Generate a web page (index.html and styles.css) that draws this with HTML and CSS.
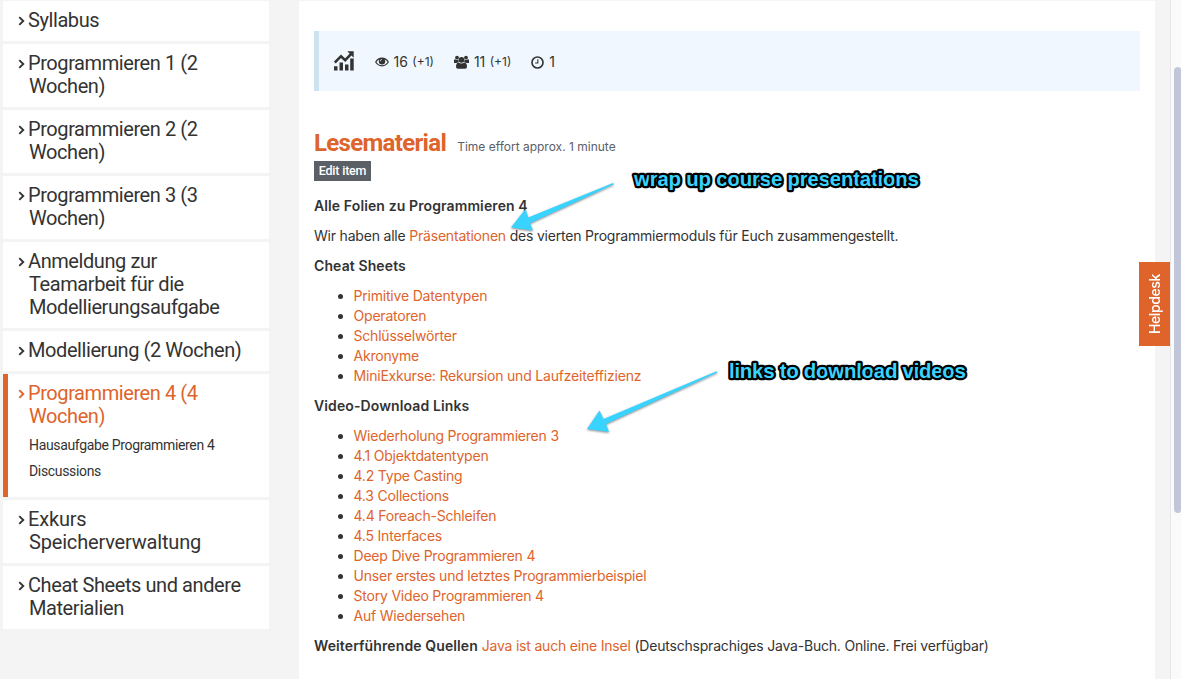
FILE: index.html
```html
<!DOCTYPE html>
<html lang="de">
<head>
<meta charset="utf-8">
<title>Lesematerial</title>
<link rel="stylesheet" href="styles.css">
</head>
<body>
<div class="page">
  <nav class="sidebar">
    <a class="section"><svg class="chevron" viewBox="0 0 6 9"><path d="M1 1l3.6 3.5L1 8"/></svg>Syllabus</a>
    <a class="section"><svg class="chevron" viewBox="0 0 6 9"><path d="M1 1l3.6 3.5L1 8"/></svg>Programmieren 1 (2<br>Wochen)</a>
    <a class="section"><svg class="chevron" viewBox="0 0 6 9"><path d="M1 1l3.6 3.5L1 8"/></svg>Programmieren 2 (2<br>Wochen)</a>
    <a class="section"><svg class="chevron" viewBox="0 0 6 9"><path d="M1 1l3.6 3.5L1 8"/></svg>Programmieren 3 (3<br>Wochen)</a>
    <a class="section"><svg class="chevron" viewBox="0 0 6 9"><path d="M1 1l3.6 3.5L1 8"/></svg>Anmeldung zur<br>Teamarbeit für die<br>Modellierungsaufgabe</a>
    <a class="section"><svg class="chevron" viewBox="0 0 6 9"><path d="M1 1l3.6 3.5L1 8"/></svg>Modellierung (2 Wochen)</a>
    <div class="section active"><svg class="chevron" viewBox="0 0 6 9"><path d="M1 1l3.6 3.5L1 8"/></svg>Programmieren 4 (4<br>Wochen)
      <div class="sub"><a>Hausaufgabe Programmieren 4</a><a>Discussions</a></div>
    </div>
    <a class="section loose"><svg class="chevron" viewBox="0 0 6 9"><path d="M1 1l3.6 3.5L1 8"/></svg>Exkurs<br>Speicherverwaltung</a>
    <a class="section"><svg class="chevron" viewBox="0 0 6 9"><path d="M1 1l3.6 3.5L1 8"/></svg>Cheat Sheets und andere<br>Materialien</a>
  </nav>
  <main class="content">
    <div class="stats">
      <svg class="chart" viewBox="0 0 20 20"><path d="M0 15.200h3.500V19.500H0zM5.500 11.500h3.500v8H5.500zM11 13.500h3.500v6H11zM16.200 7.500h3.500v12h-3.500z"/><path class="trend" d="M.8 11.500L7 5.200l4.200 4L17 3.200"/><path d="M13.300.3h6.400v6.400z"/></svg>
      <span class="stat views"><svg class="eye" viewBox="0 0 14 10"><path class="line" d="M.7 5C3.800-.1 10.200-.1 13.300 5 10.200 10.100 3.800 10.100.7 5z"/><circle cx="7" cy="4.300" r="3.200"/><path class="glint" d="M5.200 4.300Q5.200 2.500 7 2.500"/></svg>16 <small>(+1)</small></span>
      <span class="stat users"><svg class="group" viewBox="0 0 15 14"><circle cx="3" cy="2.600" r="1.900"/><circle cx="12" cy="2.600" r="1.900"/><path d="M0 8V5.500Q0 4.200 1 4.200Q3 5.500 4.400 4.600Q4.300 6.200 5 7Q3.700 7 3 8zM15 8V5.500Q15 4.200 14 4.200Q12 5.500 10.600 4.600Q10.700 6.200 10 7Q11.300 7 12 8z"/><circle cx="7.500" cy="4.800" r="2.900"/><path d="M4.600 7.500Q7.500 9.400 10.400 7.500Q13 7.600 13 12Q13 13.800 11 13.800H4Q2 13.800 2 12Q2 7.600 4.600 7.500z"/></svg>11 <small>(+1)</small></span>
      <span class="stat time"><svg class="clock" viewBox="0 0 12 12"><circle cx="6" cy="6" r="5.100"/><path d="M6.300 3v3.500H3.800"/></svg>1</span>
    </div>
    <header class="title"><h1>Lesematerial</h1><span class="effort">Time effort approx. 1 minute</span></header>
    <a class="edit">Edit item</a>
    <div class="article">
      <p><b>Alle Folien zu Programmieren 4</b></p>
      <p>Wir haben alle <a>Präsentationen</a> des vierten Programmiermoduls für Euch zusammengestellt.</p>
      <p><b>Cheat Sheets</b></p>
      <ul>
        <li><a>Primitive Datentypen</a></li>
        <li><a>Operatoren</a></li>
        <li><a>Schlüsselwörter</a></li>
        <li><a>Akronyme</a></li>
        <li><a>MiniExkurse: Rekursion und Laufzeiteffizienz</a></li>
      </ul>
      <p><b>Video-Download Links</b></p>
      <ul>
        <li><a>Wiederholung Programmieren 3</a></li>
        <li><a>4.1 Objektdatentypen</a></li>
        <li><a>4.2 Type Casting</a></li>
        <li><a>4.3 Collections</a></li>
        <li><a>4.4 Foreach-Schleifen</a></li>
        <li><a>4.5 Interfaces</a></li>
        <li><a>Deep Dive Programmieren 4</a></li>
        <li><a>Unser erstes und letztes Programmierbeispiel</a></li>
        <li><a>Story Video Programmieren 4</a></li>
        <li><a>Auf Wiedersehen</a></li>
      </ul>
      <p><b>Weiterführende Quellen</b> <a>Java ist auch eine Insel</a> (Deutschsprachiges Java-Buch. Online. Frei verfügbar)</p>
    </div>
  </main>
  <div class="scrollbar"><div class="thumb"></div></div>
</div>
<div class="helpdesk">Helpdesk</div>
<svg class="notes" viewBox="0 0 1181 679">
  <g class="arrows">
    <path d="M614 184.200L530 223.200L533 230.500L511 227.500L525.500 209L528.200 217.500L613 183z"/>
    <path d="M717.500 372.500L606 424L609 432L587 429L599.500 410.500L603.500 419L716.500 371.300z"/>
  </g>
  <text x="634" y="186" textLength="285">wrap up course presentations</text>
  <text x="729" y="377.500" textLength="237">links to download videos</text>
</svg>
</body>
</html>
```

FILE: styles.css
```css
* { box-sizing: border-box; }
body { margin: 0; overflow: hidden; background: #f4f4f4; color: #333; font-family: Inter, sans-serif; font-size: 14px; line-height: 20px; }
.page { display: flex; height: 679px; }

.sidebar { display: flex; flex-direction: column; gap: 3px; width: 266px; margin: 1px 30px 0 3px; font-family: Roboto, sans-serif; font-size: 20px; line-height: 23px; letter-spacing: -.42px; }
.section { display: block; background: #fff; padding: 8px 0 9px 26px; text-indent: -1px; white-space: nowrap; }
.loose { letter-spacing: -.18px; }
.chevron { float: left; width: 7px; height: 10px; margin: 7px 0 0 -11px; fill: none; stroke: #333; stroke-width: 1.7; }
.active { height: 123px; color: #de642b; border-left: 5px solid #de642b; padding-left: 21px; }
.active .chevron { stroke: #de642b; }
.sub { display: flex; flex-direction: column; gap: 6px; margin-top: 7px; color: #333; font-size: 14px; line-height: 20px; text-indent: 0; letter-spacing: -.34px; }

.content { width: 856px; margin-top: 1px; padding: 30px 15px 0; background: #fff; }
.stats { display: flex; align-items: center; height: 60px; padding: 2px 0 0 15px; background: #f0f7fe; border-left: 5px solid #cee3f0; font-size: 14px; }
.stats svg { fill: #333; }
.chart { width: 20px; height: 20px; margin: -2px 20.500px 0 0; }
.chart .trend { fill: none; stroke: #333; stroke-width: 2.600; }
.stat { display: flex; align-items: center; white-space: pre; }
.stat small { font-size: 12px; margin-left: .5px; }
.eye { width: 14px; height: 10px; margin-right: 5px; }
.eye .line { fill: none; stroke: #333; stroke-width: 1.200; }
.eye .glint { fill: none; stroke: #fff; stroke-width: .7; }
.users { margin-left: 20px; }
.group { width: 15px; height: 14px; margin-right: 5px; }
.time { margin-left: 20px; }
.clock { width: 13px; height: 13px; margin-right: 5px; }
.stats .clock { fill: none; stroke: #333; stroke-width: 1.500; }
.stats .clock path { stroke-width: 1; }

.title { display: flex; align-items: baseline; gap: 11px; height: 30px; margin-top: 37px; }
h1 { margin: 0; color: #de642b; font: 700 24px/30px Roboto, sans-serif; letter-spacing: -.68px; }
.effort { font-size: 12px; color: #5a6067; }
.edit { display: block; width: 57px; height: 20px; margin-top: 3px; background: #5b6067; color: #fff; font: 500 12.500px/20px Roboto, sans-serif; letter-spacing: -.2px; text-align: center; }
.article { margin-top: 15px; letter-spacing: -.2px; }
.article p { margin: 0 0 10px; white-space: nowrap; }
.article b { font-weight: 600; letter-spacing: .11px; }
.article a { color: #de642b; }
ul { margin: 0 0 10px; padding-left: 39.500px; }

.scrollbar { width: 11px; margin-left: 15px; padding: 67px 0 0 3px; background: #fafafa; border-left: 1px solid #e6e6e6; }
.thumb { height: 446px; background: #c1c7d9; border-radius: 4px 3px 3px 4px; }
.helpdesk { position: absolute; left: 1139px; top: 262px; width: 31px; height: 84px; background: #de642b; color: #fff; font: 500 14px/31px Inter, sans-serif; letter-spacing: -.4px; text-align: center; writing-mode: vertical-rl; transform: rotate(180deg); }

.notes { position: absolute; left: 0; top: 0; width: 1181px; height: 679px; pointer-events: none; }
.arrows { fill: #38d3ff; filter: drop-shadow(0 1px 1px rgba(0, 0, 0, .45)); }
.notes text { font: 700 20.500px "Liberation Sans", sans-serif; fill: #38d3ff; stroke: #000; stroke-width: 4.500px; stroke-linejoin: round; paint-order: stroke; }
```
